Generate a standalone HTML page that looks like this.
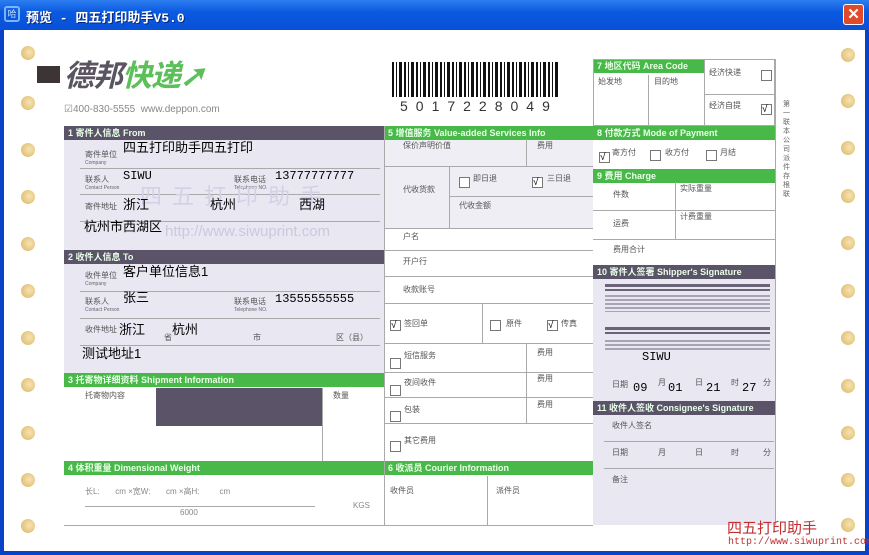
<!DOCTYPE html>
<html><head><meta charset="utf-8"><style>
*{margin:0;padding:0;box-sizing:border-box}
body{width:869px;height:555px;overflow:hidden;background:#0842c8;font-family:"Liberation Sans","Noto Sans CJK SC",sans-serif;position:relative}
.a{position:absolute}
.t{position:absolute;white-space:nowrap;font-size:6px;color:#666;line-height:1}
.cn{font-size:8px;color:#555}
.hd{position:absolute;height:14px;color:#e8ffe8;font-size:9px;font-weight:bold;line-height:14px;padding-left:4px;white-space:nowrap}
.g{background:#48b848}.p{background:#5b5468}
.lav{position:absolute;background:#e9e7f2}
.hl{position:absolute;height:1px;background:#aaa}
.vl{position:absolute;width:1px;background:#aaa}
.hole{position:absolute;width:14px;height:14px;border-radius:50%;background:radial-gradient(circle at 60% 45%,#f7e3b0,#d9b567);}
.bx{position:absolute;width:11px;height:11px;border:1px solid #777;background:#fff;font-size:10px;line-height:9px;color:#000}
.pt{position:absolute;white-space:nowrap;color:#000;font-size:13px;line-height:1}
.m{font-family:"Liberation Mono","Noto Sans CJK SC",monospace}
</style></head><body>
<div class="a" style="left:0;top:0;width:869px;height:30px;background:linear-gradient(#2c7df0,#0a5ae0 40%,#0850d8)"></div>
<div class="a" style="left:4px;top:6px;width:16px;height:16px;border:2px solid #7ab4ff;border-radius:3px;color:#bfe0ff;font-size:9px;line-height:12px;text-align:center">哈</div>
<div class="a" style="left:26px;top:7px;color:#fff;font-size:13px;font-weight:bold;font-family:'Liberation Mono','Noto Sans CJK SC',monospace;text-shadow:1px 1px #0a2a80">预览 - 四五打印助手V5.0</div>
<div class="a" style="left:843px;top:4px;width:21px;height:21px;background:#e04a2a;border:1px solid #fff;border-radius:3px;color:#fff;font-size:15px;font-weight:bold;text-align:center;line-height:19px">✕</div>
<div class="a" style="left:4px;top:30px;width:861px;height:521px;background:#fff"></div>

<div class="hole" style="left:21px;top:46px"></div><div class="hole" style="left:21px;top:96px"></div><div class="hole" style="left:21px;top:143px"></div><div class="hole" style="left:21px;top:190px"></div><div class="hole" style="left:21px;top:237px"></div><div class="hole" style="left:21px;top:284px"></div><div class="hole" style="left:21px;top:331px"></div><div class="hole" style="left:21px;top:378px"></div><div class="hole" style="left:21px;top:426px"></div><div class="hole" style="left:21px;top:473px"></div><div class="hole" style="left:21px;top:519px"></div>
<div class="hole" style="left:841px;top:48px"></div><div class="hole" style="left:841px;top:94px"></div><div class="hole" style="left:841px;top:141px"></div><div class="hole" style="left:841px;top:189px"></div><div class="hole" style="left:841px;top:236px"></div><div class="hole" style="left:841px;top:284px"></div><div class="hole" style="left:841px;top:331px"></div><div class="hole" style="left:841px;top:379px"></div><div class="hole" style="left:841px;top:426px"></div><div class="hole" style="left:841px;top:473px"></div><div class="hole" style="left:841px;top:518px"></div>

<div class="a" style="left:37px;top:66px;width:23px;height:17px;background:#3d3535"></div>
<div class="a" style="left:64px;top:60px;font-size:30px;font-weight:bold;font-style:italic;color:#5a5560;letter-spacing:-1px;line-height:1.1">德邦<span style="color:#5cbf5a">快递</span><span style="color:#5cbf5a">➚</span></div>
<div class="t" style="left:64px;top:105px;font-size:10px;color:#888">☑400-830-5555 &nbsp;www.deppon.com</div>

<div class="a" style="left:392px;top:62px;width:168px;height:35px;background:repeating-linear-gradient(90deg,#111 0 2px,#fff 2px 4px,#111 4px 5px,#fff 5px 7px,#111 7px 10px,#fff 10px 12px)"></div>
<div class="a" style="left:400px;top:98px;font-size:14px;letter-spacing:8px;color:#333">5017228049</div>

<div class="lav" style="left:64px;top:139px;width:320px;height:111px"></div>
<div class="hd p" style="left:64px;top:126px;width:320px">1 寄件人信息 From</div>
<div class="hl" style="left:80px;top:168px;width:300px"></div>
<div class="hl" style="left:80px;top:194px;width:300px"></div>
<div class="hl" style="left:80px;top:221px;width:300px"></div>
<div class="t cn" style="left:85px;top:151px">寄件单位</div><div class="t" style="left:85px;top:161px;font-size:5px">Company</div>
<div class="t cn" style="left:85px;top:176px">联系人</div><div class="t" style="left:85px;top:186px;font-size:5px">Contact Person</div>
<div class="t cn" style="left:234px;top:176px">联系电话</div><div class="t" style="left:234px;top:186px;font-size:5px">Telephone NO.</div>
<div class="t cn" style="left:85px;top:203px">寄件地址</div>
<div class="t" style="left:140px;top:186px;font-size:22px;color:#d4d0e6;letter-spacing:10px">四五打印助手</div>
<div class="t" style="left:165px;top:224px;font-size:15px;color:#ccc8de">http://www.siwuprint.com</div>
<div class="pt" style="left:123px;top:141px">四五打印助手四五打印</div>
<div class="pt m" style="left:123px;top:170px;font-size:12px">SIWU</div>
<div class="pt m" style="left:275px;top:170px;font-size:12px">13777777777</div>
<div class="pt" style="left:123px;top:198px">浙江</div><div class="pt" style="left:210px;top:198px">杭州</div><div class="pt" style="left:299px;top:198px">西湖</div>
<div class="pt" style="left:84px;top:220px">杭州市西湖区</div>

<div class="lav" style="left:64px;top:264px;width:320px;height:109px"></div>
<div class="hd p" style="left:64px;top:250px;width:320px">2 收件人信息 To</div>
<div class="hl" style="left:80px;top:291px;width:300px"></div>
<div class="hl" style="left:80px;top:318px;width:300px"></div>
<div class="hl" style="left:80px;top:345px;width:300px"></div>
<div class="t cn" style="left:85px;top:272px">收件单位</div><div class="t" style="left:85px;top:282px;font-size:5px">Company</div>
<div class="t cn" style="left:85px;top:298px">联系人</div><div class="t" style="left:85px;top:308px;font-size:5px">Contact Person</div>
<div class="t cn" style="left:234px;top:298px">联系电话</div><div class="t" style="left:234px;top:308px;font-size:5px">Telephone NO.</div>
<div class="t cn" style="left:85px;top:326px">收件地址</div><div class="t cn" style="left:164px;top:334px">省</div><div class="t cn" style="left:253px;top:334px">市</div><div class="t cn" style="left:336px;top:334px">区（县）</div>
<div class="pt" style="left:123px;top:265px">客户单位信息1</div>
<div class="pt" style="left:123px;top:291px">张三</div>
<div class="pt m" style="left:275px;top:293px;font-size:12px">13555555555</div>
<div class="pt" style="left:119px;top:323px">浙江</div><div class="pt" style="left:172px;top:323px">杭州</div>
<div class="pt" style="left:82px;top:347px">测试地址1</div>

<div class="hd g" style="left:64px;top:373px;width:320px">3 托寄物详细资料 Shipment Information</div>
<div class="t cn" style="left:85px;top:392px">托寄物内容</div>
<div class="a" style="left:156px;top:388px;width:167px;height:38px;background:#5b5468"></div>
<div class="vl" style="left:322px;top:388px;height:73px"></div>
<div class="t cn" style="left:333px;top:392px">数量</div>
<div class="hd g" style="left:64px;top:461px;width:320px">4 体积重量 Dimensional Weight</div>
<div class="t cn" style="left:85px;top:488px;color:#888">长L: &nbsp; &nbsp; &nbsp; cm ×宽W: &nbsp; &nbsp; &nbsp; cm ×高H: &nbsp; &nbsp; &nbsp; &nbsp; cm</div>
<div class="hl" style="left:85px;top:506px;width:230px"></div>
<div class="t cn" style="left:180px;top:509px;color:#888">6000</div><div class="t cn" style="left:353px;top:502px;color:#888">KGS</div>
<div class="hl" style="left:64px;top:525px;width:529px"></div>

<div class="lav" style="left:384px;top:139px;width:209px;height:89px;background:#efeef5"></div>
<div class="hd g" style="left:384px;top:126px;width:209px">5 增值服务 Value-added Services Info</div>
<div class="t cn" style="left:403px;top:142px">保价声明价值</div><div class="t cn" style="left:537px;top:142px">费用</div>
<div class="vl" style="left:526px;top:139px;height:27px"></div>
<div class="hl" style="left:384px;top:166px;width:209px"></div>
<div class="vl" style="left:449px;top:166px;height:62px"></div>
<div class="t cn" style="left:403px;top:186px">代收货款</div>
<div class="bx" style="left:459px;top:177px"></div><div class="t cn" style="left:473px;top:175px">即日退</div>
<div class="bx" style="left:532px;top:177px">√</div><div class="t cn" style="left:547px;top:175px">三日退</div>
<div class="hl" style="left:449px;top:196px;width:144px"></div>
<div class="t cn" style="left:459px;top:202px">代收金额</div>
<div class="hl" style="left:384px;top:228px;width:209px"></div>
<div class="t cn" style="left:403px;top:233px">户名</div>
<div class="hl" style="left:384px;top:250px;width:209px"></div>
<div class="t cn" style="left:403px;top:258px">开户行</div>
<div class="hl" style="left:384px;top:276px;width:209px"></div>
<div class="t cn" style="left:403px;top:286px">收款账号</div>
<div class="hl" style="left:384px;top:303px;width:209px"></div>
<div class="bx" style="left:390px;top:320px">√</div><div class="t cn" style="left:404px;top:320px">签回单</div>
<div class="vl" style="left:482px;top:303px;height:40px"></div>
<div class="bx" style="left:490px;top:320px"></div><div class="t cn" style="left:506px;top:320px">原件</div>
<div class="bx" style="left:547px;top:320px">√</div><div class="t cn" style="left:561px;top:320px">传真</div>
<div class="hl" style="left:384px;top:343px;width:209px"></div>
<div class="vl" style="left:526px;top:343px;height:80px"></div>
<div class="bx" style="left:390px;top:358px"></div><div class="t cn" style="left:404px;top:352px">短信服务</div><div class="t cn" style="left:537px;top:349px">费用</div>
<div class="hl" style="left:384px;top:372px;width:209px"></div>
<div class="bx" style="left:390px;top:385px"></div><div class="t cn" style="left:404px;top:379px">夜间收件</div><div class="t cn" style="left:537px;top:375px">费用</div>
<div class="hl" style="left:384px;top:397px;width:209px"></div>
<div class="bx" style="left:390px;top:411px"></div><div class="t cn" style="left:404px;top:406px">包装</div><div class="t cn" style="left:537px;top:401px">费用</div>
<div class="hl" style="left:384px;top:423px;width:209px"></div>
<div class="bx" style="left:390px;top:441px"></div><div class="t cn" style="left:404px;top:437px">其它费用</div>
<div class="hd g" style="left:384px;top:461px;width:209px">6 收派员 Courier Information</div>
<div class="t cn" style="left:390px;top:487px">收件员</div><div class="t cn" style="left:496px;top:487px">派件员</div>
<div class="vl" style="left:487px;top:476px;height:49px"></div>
<div class="vl" style="left:384px;top:126px;height:399px"></div>

<div class="hd g" style="left:593px;top:59px;width:111px">7 地区代码 Area Code</div>
<div class="a" style="left:593px;top:59px;width:182px;height:67px;border:1px solid #aaa"></div>
<div class="t cn" style="left:598px;top:78px">始发地</div><div class="t cn" style="left:654px;top:78px">目的地</div>
<div class="vl" style="left:648px;top:75px;height:51px"></div><div class="vl" style="left:704px;top:59px;height:67px"></div>
<div class="hl" style="left:704px;top:94px;width:71px"></div>
<div class="t cn" style="left:709px;top:69px">经济快递</div><div class="bx" style="left:761px;top:70px"></div>
<div class="t cn" style="left:709px;top:102px">经济自提</div><div class="bx" style="left:761px;top:104px">√</div>
<div class="hd g" style="left:593px;top:126px;width:182px">8 付款方式 Mode of Payment</div>
<div class="bx" style="left:599px;top:152px">√</div><div class="t cn" style="left:612px;top:149px">寄方付</div>
<div class="bx" style="left:650px;top:150px"></div><div class="t cn" style="left:665px;top:149px">收方付</div>
<div class="bx" style="left:706px;top:150px"></div><div class="t cn" style="left:720px;top:149px">月结</div>
<div class="hd g" style="left:593px;top:169px;width:182px">9 费用 Charge</div>
<div class="t cn" style="left:613px;top:191px">件数</div><div class="t cn" style="left:613px;top:220px">运费</div><div class="t cn" style="left:613px;top:246px">费用合计</div>
<div class="vl" style="left:675px;top:182px;height:57px"></div>
<div class="hl" style="left:593px;top:210px;width:182px"></div><div class="hl" style="left:593px;top:239px;width:182px"></div>
<div class="t cn" style="left:680px;top:185px">实际重量</div><div class="t cn" style="left:680px;top:213px">计费重量</div>
<div class="lav" style="left:593px;top:279px;width:182px;height:246px"></div>
<div class="hd p" style="left:593px;top:265px;width:182px">10 寄件人签署 Shipper's Signature</div>
<div class="a" style="left:605px;top:284px;width:165px;height:7px;background:repeating-linear-gradient(#6b6478 0 3px,transparent 3px 5px)"></div>
<div class="a" style="left:605px;top:295px;width:165px;height:17px;background:repeating-linear-gradient(#a8a4b4 0 2px,transparent 2px 4px)"></div>
<div class="a" style="left:605px;top:327px;width:165px;height:7px;background:repeating-linear-gradient(#6b6478 0 3px,transparent 3px 5px)"></div>
<div class="a" style="left:605px;top:340px;width:165px;height:10px;background:repeating-linear-gradient(#a8a4b4 0 2px,transparent 2px 4px)"></div>
<div class="pt m" style="left:642px;top:351px;font-size:12px">SIWU</div>
<div class="t cn" style="left:612px;top:381px">日期</div><div class="t cn" style="left:658px;top:379px">月</div><div class="t cn" style="left:695px;top:379px">日</div><div class="t cn" style="left:731px;top:379px">时</div><div class="t cn" style="left:763px;top:379px">分</div>
<div class="pt m" style="left:633px;top:382px;font-size:12px">09</div><div class="pt m" style="left:668px;top:382px;font-size:12px">01</div><div class="pt m" style="left:706px;top:382px;font-size:12px">21</div><div class="pt m" style="left:742px;top:382px;font-size:12px">27</div>
<div class="hd p" style="left:593px;top:401px;width:182px">11 收件人签收 Consignee's Signature</div>
<div class="t cn" style="left:612px;top:422px">收件人签名</div>
<div class="hl" style="left:604px;top:441px;width:170px"></div>
<div class="t cn" style="left:612px;top:449px">日期</div><div class="t cn" style="left:658px;top:449px">月</div><div class="t cn" style="left:695px;top:449px">日</div><div class="t cn" style="left:731px;top:449px">时</div><div class="t cn" style="left:763px;top:449px">分</div>
<div class="hl" style="left:604px;top:468px;width:170px"></div>
<div class="t cn" style="left:612px;top:476px">备注</div>
<div class="vl" style="left:775px;top:59px;height:466px"></div>
<div class="t" style="left:783px;top:100px;font-size:7px;width:8px;white-space:normal;line-height:9px">第一联本公司派件存根联</div>

<div class="a" style="left:727px;top:517px;color:#c03030;font-size:15px">四五打印助手</div>
<div class="a" style="left:728px;top:537px;color:#c03030;font-size:10px;font-family:'Liberation Mono',monospace">http://www.siwuprint.com</div>
</body></html>
